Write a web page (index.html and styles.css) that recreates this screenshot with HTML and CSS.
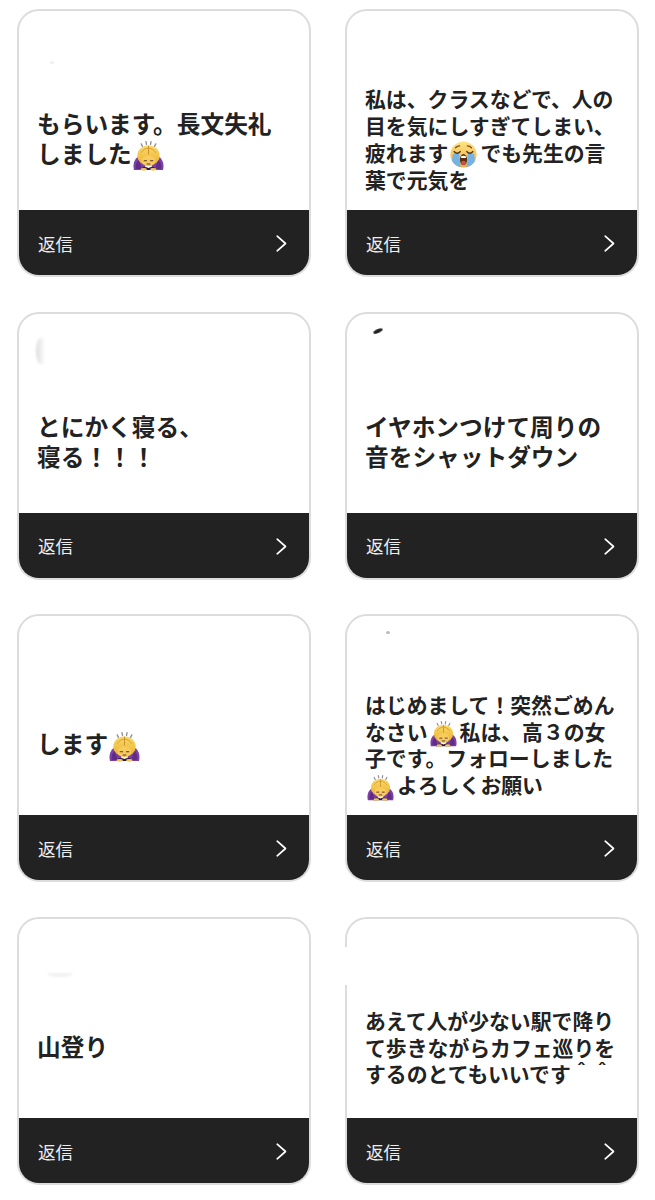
FILE: index.html
```html
<!DOCTYPE html>
<html lang="ja">
<head>
    <meta charset="utf-8">
    <title>返信</title>
    <link rel="stylesheet" href="styles.css">
</head>
<body>
    <svg class="defs" width="0" height="0">
        <defs>
            <linearGradient id="hair" x1="0" y1="0" x2="0" y2="1">
                <stop offset="0" stop-color="#f9d869"/>
                <stop offset="1" stop-color="#ecb22e"/>
            </linearGradient>
            <linearGradient id="cryface" x1="0" y1="0" x2="0" y2="1">
                <stop offset="0" stop-color="#fce583"/>
                <stop offset="1" stop-color="#f2a93c"/>
            </linearGradient>
            <symbol id="bow" viewBox="0 0 32 32">
                <path d="M8.500 4l1.200 2.600M13.400 1.800l.5 2.800M18.600 1.800l-.5 2.800M23.500 4l-1.200 2.600" stroke="#8e8e96" stroke-width="1.400" stroke-linecap="round"/>
                <path d="M1 31c-1.500-6 .5-13 7-15l4 2 1 13z" fill="#7d3ea6"/>
                <path d="M31 31c1.500-6-.5-13-7-15l-4 2-1 13z" fill="#7d3ea6"/>
                <path d="M3 30c-.6-4 .4-7 3-9.500l3 9.500z" fill="#5f2c86"/>
                <path d="M29 30c.6-4-.4-7-3-9.500l-3 9.500z" fill="#5f2c86"/>
                <ellipse cx="16" cy="16" rx="11.500" ry="10.500" fill="url(#hair)"/>
                <path d="M16 6v9" stroke="#c9912a" stroke-width="1"/>
                <path d="M8.500 13c2-3 4.500-4.500 7-4.500M23.500 13c-2-3-4.500-4.500-7-4.500" stroke="#d39e2e" stroke-width="1" fill="none"/>
                <ellipse cx="16" cy="21.500" rx="7" ry="5.500" fill="#f8cb60"/>
                <path d="M11.500 21.500h2.500M18 21.500h2.500M14.500 24.800h3" stroke="#5b3a1e" stroke-width="1.100" stroke-linecap="round"/>
                <path d="M7.500 31c1.500-3.500 5-4 8.500-2 3.500-2 7-1.500 8.500 2z" fill="#2f1640"/>
                <ellipse cx="11" cy="30.300" rx="3.200" ry="1.500" fill="#f3c75c"/>
                <ellipse cx="21" cy="30.300" rx="3.200" ry="1.500" fill="#f3c75c"/>
            </symbol>
            <symbol id="cry" viewBox="0 0 32 32">
                <circle cx="16" cy="16" r="15.500" fill="url(#cryface)"/>
                <path d="M3.500 15h7.500l1.500 16c-4.500-1-8-3.500-10-7zM28.500 15h-7.500l-1.500 16c4.500-1 8-3.500 10-7z" fill="#73b4e6"/>
                <path d="M5 12.500c2 2.800 5 2.800 7 0M20 12.500c2 2.800 5 2.800 7 0" stroke="#4a2c16" stroke-width="1.700" fill="none" stroke-linecap="round"/>
                <path d="M6.500 8c1.500-1.500 3.200-2.200 5-2.300M25.500 8c-1.500-1.500-3.200-2.200-5-2.300" stroke="#7a4d20" stroke-width="1.400" fill="none" stroke-linecap="round"/>
                <ellipse cx="16" cy="22" rx="4.200" ry="6.500" fill="#5b2b16"/>
                <path d="M12.800 18.300c2-1 4.400-1 6.400 0l-.5 1.700h-5.400z" fill="#fff"/>
                <ellipse cx="16" cy="25.800" rx="2.800" ry="2.300" fill="#c9584c"/>
            </symbol>
            <symbol id="next" viewBox="0 0 11 17">
                <path d="M1.200 1.200L9.500 8.500L1.200 15.800" fill="none" stroke="#fff" stroke-width="1.700" stroke-linecap="round" stroke-linejoin="round"/>
            </symbol>
        </defs>
    </svg>

    <div class="grid">
        <div class="card">
            <span class="smudge smudge-dot"></span>
            <div class="card-body">
                <p class="message">もらいます。長文失礼<br>しました<svg class="emoji"><use href="#bow"/></svg></p>
            </div>
            <div class="reply"><span class="reply-label">返信</span><svg class="chevron"><use href="#next"/></svg></div>
        </div>

        <div class="card">
            <div class="card-body">
                <p class="message long">私は、クラスなどで、人の<br>目を気にしすぎてしまい、<br>疲れます<svg class="emoji"><use href="#cry"/></svg>でも先生の言<br>葉で元気を</p>
            </div>
            <div class="reply"><span class="reply-label">返信</span><svg class="chevron"><use href="#next"/></svg></div>
        </div>

        <div class="card">
            <span class="smudge smudge-crescent"></span>
            <div class="card-body">
                <p class="message">とにかく寝る、<br>寝る！！！</p>
            </div>
            <div class="reply"><span class="reply-label">返信</span><svg class="chevron"><use href="#next"/></svg></div>
        </div>

        <div class="card">
            <span class="smudge smudge-mark"></span>
            <div class="card-body">
                <p class="message">イヤホンつけて周りの<br>音をシャットダウン</p>
            </div>
            <div class="reply"><span class="reply-label">返信</span><svg class="chevron"><use href="#next"/></svg></div>
        </div>

        <div class="card">
            <div class="card-body">
                <p class="message">します<svg class="emoji"><use href="#bow"/></svg></p>
            </div>
            <div class="reply"><span class="reply-label">返信</span><svg class="chevron"><use href="#next"/></svg></div>
        </div>

        <div class="card">
            <span class="smudge smudge-speck"></span>
            <div class="card-body">
                <p class="message long">はじめまして！突然ごめん<br>なさい<svg class="emoji"><use href="#bow"/></svg>私は、高３の女<br>子です。フォローしました<br><svg class="emoji"><use href="#bow"/></svg>よろしくお願い</p>
            </div>
            <div class="reply"><span class="reply-label">返信</span><svg class="chevron"><use href="#next"/></svg></div>
        </div>

        <div class="card">
            <span class="smudge smudge-shadow"></span>
            <div class="card-body">
                <p class="message">山登り</p>
            </div>
            <div class="reply"><span class="reply-label">返信</span><svg class="chevron"><use href="#next"/></svg></div>
        </div>

        <div class="card">
            <span class="border-gap"></span>
            <div class="card-body">
                <p class="message long">あえて人が少ない駅で降り<br>て歩きながらカフェ巡りを<br>するのとてもいいです＾＾</p>
            </div>
            <div class="reply"><span class="reply-label">返信</span><svg class="chevron"><use href="#next"/></svg></div>
        </div>
    </div>
</body>
</html>
```

FILE: styles.css
```css
* {
    margin: 0;
    padding: 0;
    box-sizing: border-box;
}

body {
    font-family: "Noto Sans CJK JP", "Noto Sans", sans-serif;
    background: white;
    color: #222;
}

.defs {
    position: absolute;
}

.grid {
    display: grid;
    grid-template-columns: 294px 294px;
    column-gap: 34px;
    row-gap: 34.7px;
    padding: 9px 0 0 17px;
}

.card {
    position: relative;
    display: flex;
    flex-direction: column;
    height: 268px;
    border: 2px solid #dcdcdc;
    border-radius: 22px;
    background: white;
}

.card-body {
    flex: 1;
    display: flex;
    align-items: center;
    padding: 57px 18px 0;
}

.message {
    font-size: 23.7px;
    line-height: 29.8px;
    font-weight: 700;
    white-space: nowrap;
}

.message .emoji {
    width: 31px;
    height: 31px;
    margin: -7px 1px -5px 1px;
}

.message.long {
    font-size: 20.85px;
    line-height: 26.8px;
}

.message.long .emoji {
    width: 27px;
    height: 27px;
    margin: -6px 3px -5px 2px;
}

.emoji {
    vertical-align: middle;
}

.reply {
    height: 65px;
    flex: none;
    display: flex;
    align-items: center;
    justify-content: space-between;
    padding: 0 22px 0 19px;
    background: #222;
    color: #eee;
    font-size: 17.5px;
    font-weight: 400;
    border-radius: 0 0 20px 20px;
}

.reply-label {
    margin-top: 1px;
}

.chevron {
    width: 11px;
    height: 17px;
    margin-top: 2px;
}

/* leftovers of the blurred-out names at the top of the cards */
.smudge {
    position: absolute;
    display: block;
}

.smudge-dot {
    left: 31px;
    top: 50px;
    width: 4px;
    height: 3px;
    border-radius: 50%;
    background: #eee;
}

.smudge-crescent {
    left: 17px;
    top: 24px;
    width: 9px;
    height: 26px;
    border-radius: 50% 0 0 50%;
    background: linear-gradient(to right, #dcdcdc, #fff);
    filter: blur(1px);
}

.smudge-mark {
    left: 26px;
    top: 15px;
    width: 10px;
    height: 4px;
    border-radius: 60% 40% 60% 40%;
    background: #222;
    transform: rotate(-18deg);
    filter: blur(0.5px);
}

.smudge-speck {
    left: 39px;
    top: 15px;
    width: 4px;
    height: 3px;
    border-radius: 50%;
    background: #bbb;
    filter: blur(0.5px);
}

.smudge-shadow {
    left: 29px;
    top: 54px;
    width: 24px;
    height: 4px;
    border-radius: 0 0 50% 50%;
    background: #f2f2f2;
    filter: blur(1px);
}

.border-gap {
    position: absolute;
    left: -2px;
    top: 28px;
    width: 2px;
    height: 38px;
    background: white;
}
```
